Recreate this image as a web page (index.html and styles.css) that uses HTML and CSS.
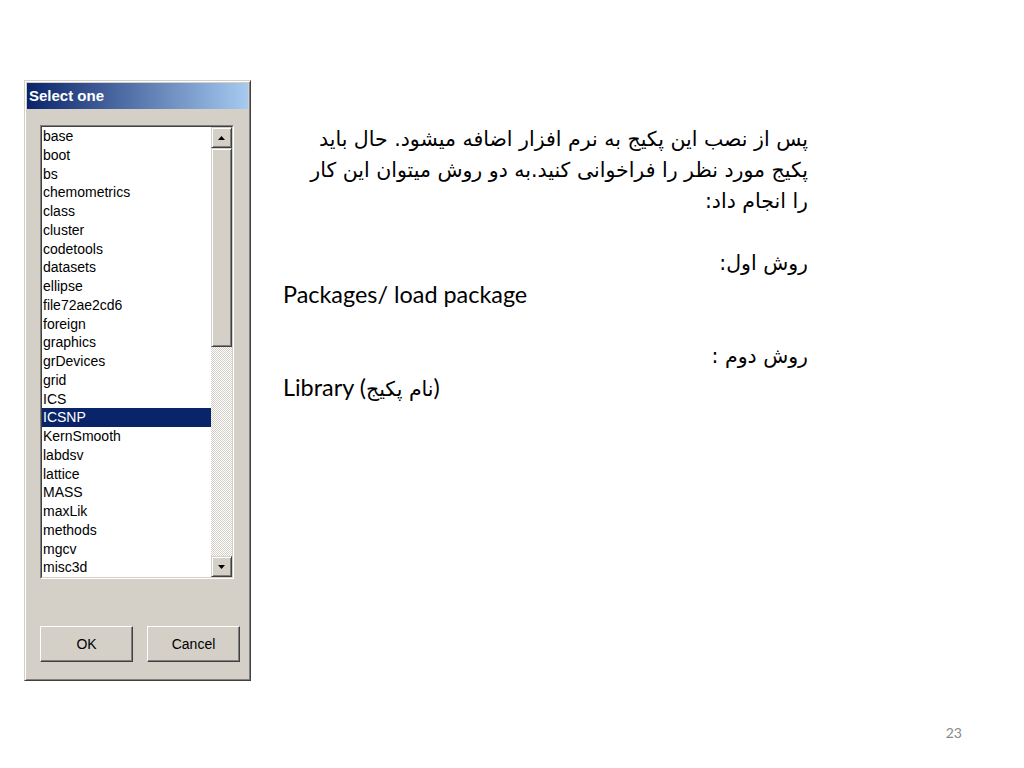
FILE: index.html
```html
<!DOCTYPE html>
<html lang="fa">
<head>
<meta charset="utf-8">
<title>Select one</title>
<link rel="stylesheet" href="styles.css">
</head>
<body>
<div class="slide">
  <div class="content">
    <div class="dialog">
      <div class="titlebar">Select one</div>
      <div class="dialog-body">
        <div class="listbox">
          <div class="listbox-inner">
            <ul class="items">
              <li>base</li>
              <li>boot</li>
              <li>bs</li>
              <li>chemometrics</li>
              <li>class</li>
              <li>cluster</li>
              <li>codetools</li>
              <li>datasets</li>
              <li>ellipse</li>
              <li>file72ae2cd6</li>
              <li>foreign</li>
              <li>graphics</li>
              <li>grDevices</li>
              <li>grid</li>
              <li>ICS</li>
              <li class="selected">ICSNP</li>
              <li>KernSmooth</li>
              <li>labdsv</li>
              <li>lattice</li>
              <li>MASS</li>
              <li>maxLik</li>
              <li>methods</li>
              <li>mgcv</li>
              <li>misc3d</li>
            </ul>
            <div class="scrollbar">
              <div class="sb-btn"><svg width="7" height="4" viewBox="0 0 7 4"><path d="M0 4 L3.5 0 L7 4 Z" fill="#000"/></svg></div>
              <div class="sb-thumb"></div>
              <div class="sb-track"></div>
              <div class="sb-btn"><svg width="7" height="4" viewBox="0 0 7 4"><path d="M0 0 L7 0 L3.5 4 Z" fill="#000"/></svg></div>
            </div>
          </div>
        </div>
        <div class="buttons">
          <div class="btn">OK</div>
          <div class="btn">Cancel</div>
        </div>
      </div>
    </div>
    <div class="text">
      <div class="line rtl" dir="rtl">پس از نصب این پکیج به نرم افزار اضافه میشود. حال باید</div>
      <div class="line rtl" dir="rtl">پکیج مورد نظر را فراخوانی کنید.به دو روش میتوان این کار</div>
      <div class="line rtl" dir="rtl">را انجام داد:</div>
      <div class="line blank"></div>
      <div class="line rtl" dir="rtl">روش اول:</div>
      <div class="line ltr">Packages/ load package</div>
      <div class="line blank"></div>
      <div class="line rtl" dir="rtl">روش دوم :</div>
      <div class="line ltr">Library (<span dir="rtl">نام پکیج</span>)</div>
    </div>
  </div>
  <div class="page-num">23</div>
</div>
</body>
</html>
```
FILE: styles.css
```css
* { box-sizing: border-box; }
html, body { margin: 0; padding: 0; background: #fff; }
.slide {
  width: 1024px;
  height: 768px;
  display: flex;
  flex-direction: column;
  font-family: "Liberation Sans", "DejaVu Sans", sans-serif;
}
.content {
  display: flex;
  align-items: flex-start;
  padding: 80px 0 0 24px;
}
.dialog {
  width: 227px;
  height: 601px;
  background: #d4d0c8;
  border: 1px solid;
  border-color: #d4d0c8 #404040 #404040 #d4d0c8;
  box-shadow: inset 1px 1px #fff, inset -1px -1px #808080;
  padding: 2px;
  display: flex;
  flex-direction: column;
}
.titlebar {
  height: 26px;
  background: linear-gradient(to right, #0a246a, #a6caf0);
  color: #fff;
  font: bold 15px/26px "Liberation Sans", sans-serif;
  padding-left: 2px;
}
.dialog-body {
  padding: 16px 0 0 13px;
}
.listbox {
  width: 194px;
  border: 1px solid;
  border-color: #808080 #fff #fff #808080;
}
.listbox-inner {
  display: flex;
  height: 452px;
  border: 1px solid;
  border-color: #404040 #d4d0c8 #d4d0c8 #404040;
}
.items {
  list-style: none;
  margin: 0;
  padding: 0;
  width: 169px;
  background: #fff;
  font: 14px/18.75px "Liberation Sans", sans-serif;
  color: #000;
}
.items li { padding-left: 1px; white-space: nowrap; }
.items li.selected { background: #0a246a; color: #fff; }
.scrollbar {
  width: 21px;
  display: flex;
  flex-direction: column;
}
.sb-btn, .sb-thumb {
  background: #d4d0c8;
  border: 1px solid;
  border-color: #d4d0c8 #404040 #404040 #d4d0c8;
  box-shadow: inset 1px 1px #fff, inset -1px -1px #808080;
}
.sb-btn {
  height: 21px;
  display: flex;
  align-items: center;
  justify-content: center;
}
.sb-btn svg { display: block; }
.sb-thumb { height: 199px; }
.sb-track {
  flex: 1;
  background: repeating-conic-gradient(#fff 0 25%, #d4d0c8 0 50%) 0 0 / 2px 2px;
}
.buttons {
  display: flex;
  gap: 14px;
  margin-top: 47px;
}
.btn {
  width: 93px;
  height: 36px;
  background: #d4d0c8;
  border: 1px solid;
  border-color: #fff #404040 #404040 #fff;
  box-shadow: inset -1px -1px #808080;
  display: flex;
  align-items: center;
  justify-content: center;
  font: 14px "Liberation Sans", sans-serif;
  color: #000;
}
.text {
  width: 525px;
  margin: 44px 0 0 32px;
  color: #000;
}
.line {
  height: 31px;
  line-height: 31px;
  white-space: nowrap;
}
.rtl {
  font-family: "DejaVu Sans", sans-serif;
  font-size: 20.5px;
  text-align: right;
}
.ltr {
  font-family: Lato, "DejaVu Sans", sans-serif;
  font-size: 23.4px;
}
.ltr span { font-family: "DejaVu Sans", sans-serif; font-size: 20.5px; }
.page-num {
  margin-top: auto;
  padding: 0 62px 25px 0;
  text-align: right;
  font: 14px/20px Lato, sans-serif;
  color: #898989;
}
```
